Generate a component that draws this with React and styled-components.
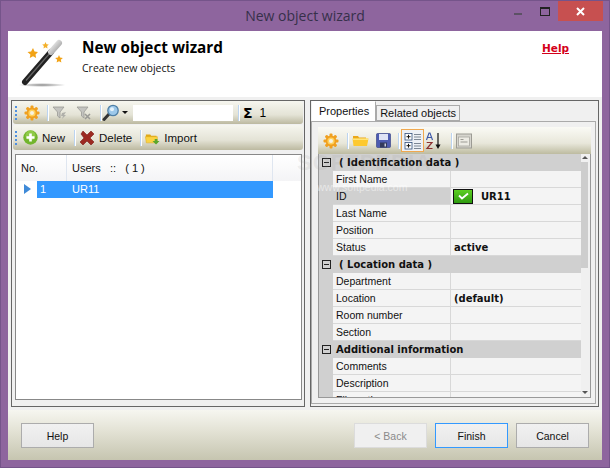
import React from 'react'
import styled, {createGlobalStyle} from 'styled-components'

const Global = createGlobalStyle`
    html, body { margin: 0; padding: 0; }
    body { width: 610px; height: 468px; overflow: hidden; font-family: "Liberation Sans", Arial, sans-serif; }
    * { box-sizing: border-box; }
`

function Gear() {
    return (
        <svg width="16" height="16" viewBox="0 0 16 16">
            <g fill="#f0a020">
                <circle cx="8" cy="8" r="5.4" />
                <rect x="6.5" y="0.5" width="3" height="15" rx="1" />
                <rect x="0.5" y="6.5" width="15" height="3" rx="1" />
                <rect x="6.5" y="0.5" width="3" height="15" rx="1" transform="rotate(45 8 8)" />
                <rect x="6.5" y="0.5" width="3" height="15" rx="1" transform="rotate(-45 8 8)" />
            </g>
            <circle cx="8" cy="8" r="3.6" fill="#ffd25e" />
            <circle cx="8" cy="8" r="2" fill="#f6f3e4" />
        </svg>
    )
}

function Funnel({cross}) {
    return (
        <svg width="16" height="16" viewBox="0 0 16 16">
            <path d="M1 2h11L8 7v6L5.5 11V7z" fill="#c4c4c0" stroke="#9a9a96" strokeWidth="0.8" />
            {cross
                ? <path d="M9 9l5 5M14 9l-5 5" stroke="#9a9a96" strokeWidth="1.6" />
                : <path d="M10 8l4-1-2 3 2 0-4 4 1-3h-2z" fill="#b0b0aa" />}
        </svg>
    )
}

function Magnifier() {
    return (
        <svg width="18" height="18" viewBox="0 0 18 18">
            <path d="M7.5 9.5L2 15.5" stroke="#333" strokeWidth="3" strokeLinecap="round" />
            <circle cx="11" cy="6.5" r="5.2" fill="#9cc8ea" stroke="#4f7fa5" strokeWidth="1.3" />
            <circle cx="10" cy="5.2" r="2" fill="#e4f2fb" />
        </svg>
    )
}

function PlusIcon() {
    return (
        <svg width="15" height="15" viewBox="0 0 15 15">
            <circle cx="7.5" cy="7.5" r="7.2" fill="#72b52c" />
            <circle cx="7.5" cy="5.5" r="5" fill="#a4d85a" opacity="0.6" />
            <path d="M7.5 3.5v8M3.5 7.5h8" stroke="#fff" strokeWidth="2.6" />
        </svg>
    )
}

function DeleteIcon() {
    return (
        <svg width="16" height="16" viewBox="0 0 16 16">
            <path d="M2 4l2-3 4 4 4-4 3 3-4 4 4 4-3 3-4-4-4 4-3-3 4-4z" fill="#9c2a22" stroke="#7c1d18" strokeWidth="0.6" />
        </svg>
    )
}

function ImportIcon() {
    return (
        <svg width="15" height="14" viewBox="0 0 17 15">
            <path d="M1 3.5h5l1 1.5h6v2H1z" fill="#e0a818" />
            <path d="M0.5 6h13.5v7H1.5z" fill="#fbd342" stroke="#dfa91d" strokeWidth="0.6" />
            <path d="M11 8.5h3V11h2.5l-4 4-4-4H11z" fill="#5aa62d" />
        </svg>
    )
}

function FolderIcon() {
    return (
        <svg width="17" height="15" viewBox="0 0 17 15">
            <path d="M1 4V3h5l1 1.5h7V6H1z" fill="#eba81a" />
            <path d="M0.5 5.5h16L15 13H1.5z" fill="#fdc92f" />
            <path d="M1 5.5h15V7H1z" fill="#ffe47a" />
        </svg>
    )
}

function SaveIcon() {
    return (
        <svg width="15" height="15" viewBox="0 0 15 15">
            <rect x="0.5" y="0.5" width="14" height="14" rx="1" fill="#4d5bb0" stroke="#2f3a80" strokeWidth="0.6" />
            <rect x="3" y="1" width="9" height="6" fill="#dfe3f5" />
            <rect x="4" y="9.5" width="7" height="5" fill="#333a5c" />
            <rect x="8.5" y="10.5" width="1.5" height="3" fill="#c9cde0" />
        </svg>
    )
}

function CategoryIcon() {
    return (
        <svg width="20" height="20" viewBox="0 0 20 20">
            <rect x="2" y="2.5" width="7" height="6.5" fill="#fff" stroke="#33507c" strokeWidth="0.8" />
            <path d="M3.5 5.7h4M5.500 3.800v3.800" stroke="#111" strokeWidth="1" />
            <rect x="2" y="11.5" width="7" height="6.5" fill="#fff" stroke="#33507c" strokeWidth="0.8" />
            <path d="M3.5 14.7h4M5.500 12.800v3.800" stroke="#111" strokeWidth="1" />
            <path d="M11 3.5h7M11 6h7M11 8.5h7M11 12.5h7M11 15h7M11 17.5h7" stroke="#7d8794" strokeWidth="1" />
        </svg>
    )
}

function SortIcon() {
    return (
        <svg width="18" height="18" viewBox="0 0 18 18">
            <path d="M1.5 8L4 1h1l2.5 7M2.7 5.5h3.6" fill="none" stroke="#3b56a8" strokeWidth="1.1" />
            <path d="M1.7 10.5H7L2 16.5h5.500" fill="none" stroke="#8c3030" strokeWidth="1.2" />
            <path d="M13 1v14" stroke="#111" strokeWidth="1.2" />
            <path d="M10.5 12.5L13 17l2.5-4.5z" fill="#111" />
        </svg>
    )
}

function PagesIcon() {
    return (
        <svg width="16" height="16" viewBox="0 0 16 16">
            <rect x="0.5" y="1" width="15" height="14" fill="#d6d5ce" stroke="#9c9b94" />
            <rect x="2.5" y="4" width="11" height="9" fill="#ecebe4" stroke="#a7a69f" strokeWidth="0.8" />
            <path d="M4.5 6.5h3M4.5 9h7" stroke="#9c9b94" strokeWidth="1" />
        </svg>
    )
}

function Wand() {
    return (
        <svg width="50" height="50" viewBox="0 0 50 50">
            <defs>
                <linearGradient id="wandTip" x1="0" y1="0" x2="1" y2="1">
                    <stop offset="0" stopColor="#f4f4f4" />
                    <stop offset="1" stopColor="#9a9a9a" />
                </linearGradient>
                <radialGradient id="wandShadow">
                    <stop offset="0" stopColor="#8a8a8a" />
                    <stop offset="1" stopColor="#fff" />
                </radialGradient>
            </defs>
            <ellipse cx="24" cy="46" rx="24" ry="2" fill="url(#wandShadow)" />
            <path d="M7 43L33 13" stroke="#222" strokeWidth="6" strokeLinecap="round" />
            <path d="M8 41.5L32 14" stroke="#666" strokeWidth="1.2" />
            <path d="M33 13L41 4" stroke="url(#wandTip)" strokeWidth="6" strokeLinecap="round" />
            <path d="M15 9l1.5 3.500 3.500.5-2.500 2.500.6 3.500-3.100-1.700-3.200 1.700.6-3.500L9.500 13l3.600-.5z" fill="#f2a316" />
            <path d="M27.500 3l1 2.200 2.300.3-1.700 1.600.4 2.300-2-1.100-2 1.100.4-2.300-1.700-1.600 2.300-.3z" fill="#f4b02a" />
            <path d="M41 16l1.100 2.600 2.800.3-2.100 1.900.6 2.800-2.400-1.400-2.400 1.400.6-2.800-2.100-1.900 2.800-.3z" fill="#f2a316" />
        </svg>
    )
}

function CheckBadge() {
    return (
        <CheckBox>
            <svg width="13" height="8" viewBox="0 0 13 8">
                <path d="M2 3.5l3 3 6-5" fill="none" stroke="#fff" strokeWidth="1.8" />
            </svg>
        </CheckBox>
    )
}

const rows = [
    {group: '( Identification data )', pad: true},
    {label: 'First Name'},
    {label: 'ID', value: 'UR11', check: true, selected: true},
    {label: 'Last Name'},
    {label: 'Position'},
    {label: 'Status', value: 'active'},
    {group: '( Location data )', pad: true},
    {label: 'Department'},
    {label: 'Location', value: '(default)'},
    {label: 'Room number'},
    {label: 'Section'},
    {group: 'Additional information'},
    {label: 'Comments'},
    {label: 'Description'},
    {label: 'File path'},
]

export default function App() {
    return (
        <Window>
            <Global />
            <TitleBar>
                <Title>New object wizard</Title>
                <Caption>
                    <MinButton />
                    <MaxButton />
                    <CloseButton>
                        <svg width="11" height="11" viewBox="0 0 11 11">
                            <path d="M2 2l7 7M9 2l-7 7" stroke="#fff" strokeWidth="2" />
                        </svg>
                    </CloseButton>
                </Caption>
            </TitleBar>
            <Client>
                <Header>
                    <WandSlot><Wand /></WandSlot>
                    <HeaderText>
                        <HeaderTitle>New object wizard</HeaderTitle>
                        <HeaderSub>Create new objects</HeaderSub>
                    </HeaderText>
                    <HelpLink href="#">Help</HelpLink>
                </Header>
                <Body>
                    <LeftPanel>
                        <Toolbar>
                            <Grip />
                            <ToolIcon><Gear /></ToolIcon>
                            <Sep left={5} right={0} />
                            <ToolIcon size={24}><Funnel /></ToolIcon>
                            <ToolIcon size={24}><Funnel cross /></ToolIcon>
                            <Sep left={4} right={0} />
                            <ToolIcon><Magnifier /></ToolIcon>
                            <DropArrow />
                            <SearchBox />
                            <Sep left={5} right={0} />
                            <SumLabel>Σ</SumLabel>
                            <SumCount>1</SumCount>
                        </Toolbar>
                        <Toolbar tall>
                            <Grip />
                            <ToolButton><PlusIcon />New</ToolButton>
                            <Sep left={8} right={3} />
                            <ToolButton><DeleteIcon />Delete</ToolButton>
                            <Sep left={7} right={3} />
                            <ToolButton><ImportIcon />Import</ToolButton>
                        </Toolbar>
                        <ListBox>
                            <ListHead>
                                <HeadCell width="51px">No.</HeadCell>
                                <HeadCell width="206px">Users&nbsp;&nbsp;&nbsp;::&nbsp;&nbsp;&nbsp;( 1 )</HeadCell>
                            </ListHead>
                            <ListRow>
                                <Marker />
                                <RowNo>1</RowNo>
                                <RowName>UR11</RowName>
                            </ListRow>
                        </ListBox>
                    </LeftPanel>
                    <RightPanel>
                        <Tabs>
                            <Tab active>Properties</Tab>
                            <Tab>Related objects</Tab>
                        </Tabs>
                        <TabPage>
                            <PropToolbar>
                                <ToolIcon><Gear /></ToolIcon>
                                <Sep left={6} right={0} />
                                <ToolIcon size={24}><FolderIcon /></ToolIcon>
                                <ToolIcon size={22}><SaveIcon /></ToolIcon>
                                <Sep left={4} right={2} />
                                <ToggleIcon><CategoryIcon /></ToggleIcon>
                                <ToolIcon><SortIcon /></ToolIcon>
                                <Sep left={7} right={2} />
                                <ToolIcon><PagesIcon /></ToolIcon>
                            </PropToolbar>
                            <PropGrid>
                                <PropRows>
                                    {rows.map((r, i) => r.group ? (
                                        <GroupRow key={i}>
                                            <Expander />
                                            <GroupLabel pad={r.pad}>{r.group}</GroupLabel>
                                        </GroupRow>
                                    ) : (
                                        <PropRow key={i}>
                                            <PropName selected={r.selected}>{r.label}</PropName>
                                            <PropValue>
                                                {r.check && <CheckBadge />}
                                                {r.value}
                                            </PropValue>
                                        </PropRow>
                                    ))}
                                </PropRows>
                                <ScrollBar>
                                    <ScrollUp />
                                    <ScrollThumb />
                                    <ScrollDown />
                                </ScrollBar>
                            </PropGrid>
                        </TabPage>
                    </RightPanel>
                </Body>
                <Footer>
                    <Button>Help</Button>
                    <FooterRight>
                        <Button disabled>&lt; Back</Button>
                        <Button primary>Finish</Button>
                        <Button>Cancel</Button>
                    </FooterRight>
                </Footer>
                <Watermark>SOFTPEDIA</Watermark>
                <WatermarkUrl>www.softpedia.com</WatermarkUrl>
            </Client>
        </Window>
    )
}

const Window = styled.div`
    width: 610px;
    height: 468px;
    display: flex;
    flex-direction: column;
    background-color: #8e659e;
    border: 1px solid #75548a;
    padding: 0 7px 7px 7px;
`
const TitleBar = styled.div`
    height: 30px;
    position: relative;
    display: flex;
    justify-content: center;
    margin: 0 -7px;
    flex-shrink: 0;
`
const Title = styled.div`
    font-family: "Open Sans", sans-serif;
    font-size: 14px;
    line-height: 30px;
    color: #36304a;
`
const Caption = styled.div`
    position: absolute;
    top: 0;
    right: 6px;
    display: flex;
    align-items: flex-start;
`
const MinButton = styled.div`
    width: 8px;
    height: 2px;
    margin: 12px 18px 0 0;
    background-color: #5c5165;
`
const MaxButton = styled.div`
    width: 10px;
    height: 9px;
    margin: 6px 8px 0 0;
    border: 1px solid #222;
    border-top-width: 2px;
`
const CloseButton = styled.div`
    width: 45px;
    height: 20px;
    background-color: #c75050;
    display: flex;
    align-items: center;
    justify-content: center;
`
const Client = styled.div`
    flex: 1;
    position: relative;
    display: flex;
    flex-direction: column;
    background-color: #f0f0f0;
    overflow: hidden;
`
const Header = styled.div`
    height: 66px;
    flex-shrink: 0;
    display: flex;
    background-color: #fff;
    padding: 8px 0 0 10px;
`
const WandSlot = styled.div`
    width: 55px;
`
const HeaderText = styled.div`
    flex: 1;
    margin-top: -2px;
    padding-left: 9px;
`
const HeaderTitle = styled.div`
    font-family: "Open Sans", sans-serif;
    font-size: 15.3px;
    font-weight: 700;
    line-height: 20px;
    color: #000;
`
const HeaderSub = styled.div`
    font-family: "Open Sans", sans-serif;
    font-size: 10.5px;
    line-height: 14px;
    margin-top: 4px;
    color: #111;
`
const HelpLink = styled.a`
    font-family: "DejaVu Sans", sans-serif;
    font-size: 10.5px;
    font-weight: 700;
    color: #d4001a;
    margin: 2px 33px 0 0;
    line-height: 14px;
    height: 16px;
`
const Body = styled.div`
    flex: 1;
    display: flex;
    padding: 3px;
    gap: 5px;
    min-height: 0;
`
const LeftPanel = styled.div`
    width: 294px;
    border: 1px solid #666;
    padding: 0 1px 6px 1px;
    display: flex;
    flex-direction: column;
`
const Toolbar = styled.div`
    height: ${props => props.tall ? '25px' : '23px'};
    margin-bottom: ${props => props.tall ? '0' : '1px'};
    flex-shrink: 0;
    display: flex;
    align-items: center;
    padding-left: 2px;
    border-radius: 3px;
    background: linear-gradient(#f6f6ef, #e4e3d6 60%, #bcb9a0);
`
const Grip = styled.div`
    width: 2px;
    height: 14px;
    margin-right: 5px;
    background: repeating-linear-gradient(#4f8fe0 0 2px, transparent 2px 4px);
`
const ToolIcon = styled.span`
    display: flex;
    align-items: center;
    justify-content: center;
    width: ${props => props.size || 20}px;
    height: 20px;
    flex-shrink: 0;
`
const ToggleIcon = styled(ToolIcon)`
    width: 23px;
    height: 23px;
    border: 1px solid #f0a850;
    background-color: #eef1f6;
`
const Sep = styled.span`
    width: 1px;
    height: 16px;
    margin: 0 ${props => props.right}px 0 ${props => props.left}px;
    background-color: #bcd4f0;
    box-shadow: 1px 0 0 #fff;
    flex-shrink: 0;
`
const DropArrow = styled.span`
    width: 0;
    height: 0;
    margin: 0 5px 0 1px;
    border-left: 3px solid transparent;
    border-right: 3px solid transparent;
    border-top: 3px solid #111;
`
const SearchBox = styled.div`
    width: 100px;
    height: 16px;
    background-color: #fff;
`
const SumLabel = styled.span`
    font-family: "DejaVu Sans", sans-serif;
    font-size: 14px;
    font-weight: 700;
    line-height: 16px;
    margin-left: 4px;
    color: #000;
`
const SumCount = styled.span`
    font-size: 12px;
    margin-left: 7px;
    color: #000;
`
const ToolButton = styled.span`
    display: flex;
    align-items: center;
    gap: 4px;
    font-size: 11.5px;
    padding: 0 1px;
    color: #111;
`
const ListBox = styled.div`
    flex: 1;
    margin: 4px 1px 0 2px;
    border: 1px solid #888;
    background-color: #fff;
`
const ListHead = styled.div`
    display: flex;
    height: 26px;
    background: linear-gradient(#fff, #f4f4f6);
`
const HeadCell = styled.div`
    width: ${props => props.width};
    font-size: 11px;
    line-height: 26px;
    padding-left: 5px;
    color: #111;
    border-right: 1px solid #dfe6f0;
`
const ListRow = styled.div`
    display: flex;
    height: 17px;
    font-size: 11px;
    line-height: 17px;
    color: #fff;
`
const Marker = styled.span`
    width: 21px;
    position: relative;
    &::after {
        content: '';
        position: absolute;
        left: 8px;
        top: 3px;
        border-left: 7px solid #3f8ad8;
        border-top: 5.5px solid transparent;
        border-bottom: 5.5px solid transparent;
    }
`
const RowNo = styled.span`
    width: 30px;
    padding-left: 3px;
    background-color: #3399ff;
`
const RowName = styled.span`
    width: 206px;
    padding-left: 5px;
    background-color: #3399ff;
`
const RightPanel = styled.div`
    width: 289px;
    border: 1px solid #666;
    padding: 1px 2px 2px 0;
    display: flex;
    flex-direction: column;
`
const Tabs = styled.div`
    display: flex;
    height: 19px;
    align-items: flex-end;
    padding-left: 1px;
    position: relative;
    z-index: 1;
    flex-shrink: 0;
`
const Tab = styled.div`
    height: ${props => props.active ? '20px' : '16px'};
    padding: 0 ${props => props.active ? '6px' : '3px'};
    font-size: 11px;
    line-height: ${props => props.active ? '18px' : '15px'};
    color: #111;
    background-color: ${props => props.active ? '#fff' : '#f0f0f0'};
    border: 1px solid #aaa;
    border-bottom: ${props => props.active ? 'none' : '1px solid #aaa'};
    border-top-color: ${props => props.active ? '#fff' : '#aaa'};
    border-left-color: ${props => props.active ? '#fff' : '#aaa'};
`
const TabPage = styled.div`
    flex: 1;
    border: 1px solid #aaa;
    padding: 5px 4px 5px 6px;
    display: flex;
    flex-direction: column;
    min-height: 0;
`
const PropToolbar = styled.div`
    height: 27px;
    flex-shrink: 0;
    display: flex;
    align-items: center;
    padding-left: 3px;
    background: linear-gradient(#fafaf5, #e8e7da 60%, #bdbba0);
`
const PropGrid = styled.div`
    flex: 1;
    display: flex;
    border: 1px solid #999;
    border-top: none;
    min-height: 0;
    overflow: hidden;
    background-color: #f4f4f4;
`
const PropRows = styled.div`
    flex: 1;
    overflow: hidden;
`
const GroupRow = styled.div`
    display: flex;
    align-items: center;
    height: 17px;
    background-color: #d0d0d0;
`
const Expander = styled.span`
    width: 9px;
    height: 9px;
    margin-left: 3px;
    border: 1px solid #222;
    flex-shrink: 0;
    background: linear-gradient(#222, #222) center / 5px 1px no-repeat;
`
const GroupLabel = styled.span`
    font-family: "DejaVu Sans", sans-serif;
    font-size: 10px;
    font-weight: 700;
    color: #111;
    margin-left: ${props => props.pad ? '8px' : '5px'};
    white-space: pre;
`
const PropRow = styled.div`
    display: flex;
    height: 17px;
    border-left: 14px solid #d0d0d0;
    background-color: #f4f4f4;
`
const PropName = styled.div`
    width: 118px;
    font-size: 10.5px;
    line-height: 16px;
    padding-left: 3px;
    color: #111;
    background-color: ${props => props.selected ? '#d0d0d0' : 'transparent'};
    border-right: 1px solid #d8d8d8;
    border-bottom: 1px solid #d8d8d8;
`
const PropValue = styled.div`
    flex: 1;
    display: flex;
    align-items: center;
    font-family: "DejaVu Sans", sans-serif;
    font-size: 10px;
    font-weight: 700;
    line-height: 16px;
    padding: 1px 0 0 3px;
    color: #111;
    border-bottom: 1px solid #d8d8d8;
`
const CheckBox = styled.span`
    width: 20px;
    height: 15px;
    margin: -1px 8px 0 -1px;
    display: flex;
    align-items: center;
    justify-content: center;
    border: 1px solid #111;
    background: linear-gradient(#5ccf22, #2e9a10);
`
const ScrollBar = styled.div`
    width: 9px;
    flex-shrink: 0;
    display: flex;
    flex-direction: column;
    background-color: #f0f0f0;
`
const ScrollUp = styled.div`
    height: 8px;
    position: relative;
    &::after {
        content: '';
        position: absolute;
        left: 1px;
        top: 2px;
        border-left: 3px solid transparent;
        border-right: 3px solid transparent;
        border-bottom: 3px solid #555;
    }
`
const ScrollThumb = styled.div`
    width: 7px;
    height: 106px;
    background-color: #cdcdcd;
`
const ScrollDown = styled.div`
    margin-top: auto;
    height: 8px;
    position: relative;
    &::after {
        content: '';
        position: absolute;
        left: 1px;
        top: 2px;
        border-left: 3px solid transparent;
        border-right: 3px solid transparent;
        border-top: 3px solid #555;
    }
`
const Footer = styled.div`
    height: 50px;
    flex-shrink: 0;
    display: flex;
    justify-content: space-between;
    align-items: flex-start;
    padding: 13px 13px 0 13px;
    background: linear-gradient(#f6f6f0, #e4e3d6 40%, #c6c5b0);
`
const FooterRight = styled.div`
    display: flex;
    gap: 8px;
`
const Button = styled.button`
    width: 73px;
    height: 25px;
    padding: 0;
    font-family: "Liberation Sans", Arial, sans-serif;
    font-size: 10.5px;
    color: ${props => props.disabled ? '#8a8a8a' : '#111'};
    background: ${props => props.disabled ? '#f0f0f0' : 'linear-gradient(#f1f1f1, #e6e6e6)'};
    border: 1px solid ${props => props.primary ? '#3399ff' : props.disabled ? '#dcdcdc' : '#acacac'};
`
const Watermark = styled.div`
    position: absolute;
    left: 289px;
    top: 119px;
    font-family: "Liberation Sans", sans-serif;
    font-size: 22px;
    font-weight: 700;
    letter-spacing: 1px;
    color: rgba(150, 150, 150, 0.14);
    pointer-events: none;
`
const WatermarkUrl = styled.div`
    position: absolute;
    left: 309px;
    top: 150px;
    font-size: 10.5px;
    color: rgba(255, 255, 255, 0.5);
    pointer-events: none;
`
